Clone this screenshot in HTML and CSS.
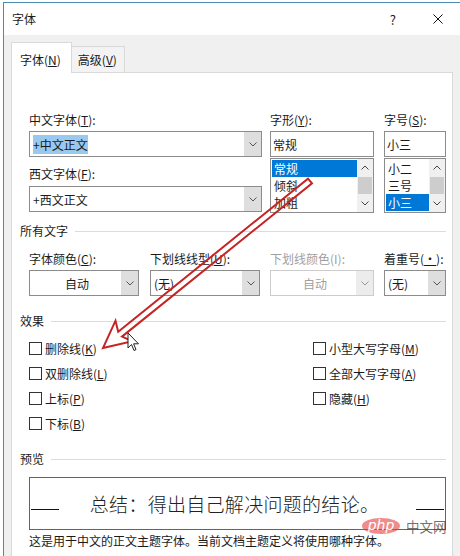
FILE: index.html
```html
<!DOCTYPE html>
<html>
<head>
<meta charset="utf-8">
<title>字体</title>
<link rel="stylesheet" href="styles.css">
</head>
<body>
<div class="window">
  <div class="titlebar">
    <span class="title">字体</span>
    <span class="help">?</span>
    <svg class="close" width="10" height="10" viewBox="0 0 10 10"><path d="M0.5 0.5L9.5 9.5M9.5 0.5L0.5 9.5" stroke="#111" stroke-width="1"/></svg>
  </div>

  <div class="tabs">
    <div class="tab active">字体(<u>N</u>)</div>
    <div class="tab">高级(<u>V</u>)</div>
  </div>

  <div class="panel">

    <div class="fontrow ind">
      <div class="col-face">
        <div class="label">中文字体(<u>T</u>):</div>
        <div class="combo">
          <span class="value"><span class="sel">+中文正文</span></span>
          <span class="drop"><svg width="8" height="5" viewBox="0 0 8 5"><path d="M0.5 0.5L4 4L7.5 0.5" fill="none" stroke="#555"/></svg></span>
        </div>
        <div class="label second">西文字体(<u>F</u>):</div>
        <div class="combo">
          <span class="value">+西文正文</span>
          <span class="drop"><svg width="8" height="5" viewBox="0 0 8 5"><path d="M0.5 0.5L4 4L7.5 0.5" fill="none" stroke="#555"/></svg></span>
        </div>
      </div>

      <div class="col-style">
        <div class="label">字形(<u>Y</u>):</div>
        <div class="field">常规</div>
        <div class="list">
          <div class="items">
            <div class="item on">常规</div>
            <div class="item">倾斜</div>
            <div class="item">加粗</div>
          </div>
          <div class="scroll">
            <span class="arrow"><svg width="8" height="5" viewBox="0 0 8 5"><path d="M0.5 4.5L4 1L7.5 4.5" fill="none" stroke="#444"/></svg></span>
            <span class="thumb"></span>
            <span class="arrow"><svg width="8" height="5" viewBox="0 0 8 5"><path d="M0.5 0.5L4 4L7.5 0.5" fill="none" stroke="#444"/></svg></span>
          </div>
        </div>
      </div>

      <div class="col-size">
        <div class="label">字号(<u>S</u>):</div>
        <div class="field">小三</div>
        <div class="list">
          <div class="items">
            <div class="item">小二</div>
            <div class="item">三号</div>
            <div class="item on">小三</div>
          </div>
          <div class="scroll">
            <span class="arrow"><svg width="8" height="5" viewBox="0 0 8 5"><path d="M0.5 4.5L4 1L7.5 4.5" fill="none" stroke="#444"/></svg></span>
            <span class="thumb"></span>
            <span class="arrow"><svg width="8" height="5" viewBox="0 0 8 5"><path d="M0.5 0.5L4 4L7.5 0.5" fill="none" stroke="#444"/></svg></span>
          </div>
        </div>
      </div>
    </div>

    <div class="header">所有文字<span class="rule"></span></div>

    <div class="textrow ind">
      <div class="col-color">
        <div class="label">字体颜色(<u>C</u>):</div>
        <div class="combo">
          <span class="value center">自动</span>
          <span class="drop"><svg width="8" height="5" viewBox="0 0 8 5"><path d="M0.5 0.5L4 4L7.5 0.5" fill="none" stroke="#555"/></svg></span>
        </div>
      </div>
      <div class="col-under">
        <div class="label">下划线线型(<u>U</u>):</div>
        <div class="combo">
          <span class="value">(无)</span>
          <span class="drop"><svg width="8" height="5" viewBox="0 0 8 5"><path d="M0.5 0.5L4 4L7.5 0.5" fill="none" stroke="#555"/></svg></span>
        </div>
      </div>
      <div class="col-style">
        <div class="label off">下划线颜色(I):</div>
        <div class="combo disabled">
          <span class="value center">自动</span>
          <span class="drop"><svg width="8" height="5" viewBox="0 0 8 5"><path d="M0.5 0.5L4 4L7.5 0.5" fill="none" stroke="#999"/></svg></span>
        </div>
      </div>
      <div class="col-size">
        <div class="label">着重号(<u>·</u>):</div>
        <div class="combo">
          <span class="value">(无)</span>
          <span class="drop"><svg width="8" height="5" viewBox="0 0 8 5"><path d="M0.5 0.5L4 4L7.5 0.5" fill="none" stroke="#555"/></svg></span>
        </div>
      </div>
    </div>

    <div class="header effects">效果<span class="rule"></span></div>

    <div class="checks ind">
      <label class="check"><span class="box"></span>删除线(<u>K</u>)</label>
      <label class="check"><span class="box"></span>双删除线(<u>L</u>)</label>
      <label class="check"><span class="box"></span>上标(<u>P</u>)</label>
      <label class="check"><span class="box"></span>下标(<u>B</u>)</label>
      <label class="check"><span class="box"></span>小型大写字母(<u>M</u>)</label>
      <label class="check"><span class="box"></span>全部大写字母(<u>A</u>)</label>
      <label class="check"><span class="box"></span>隐藏(<u>H</u>)</label>
    </div>

    <div class="header preview-head">预览<span class="rule"></span></div>

    <div class="preview ind">
      <span class="line"></span>
      <span class="sample">总结：得出自己解决问题的结论。</span>
      <span class="line"></span>
    </div>

    <p class="note ind">这是用于中文的正文主题字体。当前文档主题定义将使用哪种字体。</p>
  </div>
</div>

<!-- red callout arrow drawn over the dialog -->
<svg class="callout" width="460" height="556" viewBox="0 0 460 556">
  <polygon points="103,348 132.5,341.3 122,336.6 312,183.4 308,178.6 118.2,331.8 115.5,320.7" fill="none" stroke="#c62424" stroke-width="2" stroke-linejoin="miter"/>
</svg>

<svg class="cursor" width="13" height="20" viewBox="0 0 13 20">
  <path d="M1 1L1 16L4.5 12.5L7 18.5L9 17.6L6.6 11.8L11.5 11.8Z" fill="#fff" stroke="#222" stroke-width="1"/>
</svg>

<div class="watermark">
  <span class="php">php</span>
  <span class="cn">中文网</span>
</div>
</body>
</html>
```

FILE: styles.css
```css
body {
   margin: 0;
   height: 556px;
   overflow: hidden;
   background-color: white;
   font-family: "Noto Sans CJK SC", "Noto Sans", sans-serif;
   font-size: 12px;
   color: #1a1a1a;
}

u {
   text-decoration: underline;
   text-underline-offset: 1px;
}

.window {
   margin: 2px 0 0 3px;
   height: 560px;
   border-top: 1px solid #4a8cb0;
   border-left: 1px solid #4a8cb0;
   background-color: #f0f0f0;
}

.titlebar {
   height: 32px;
   display: flex;
   align-items: center;
   padding-left: 8px;
   background-color: white;
}

.title {
   flex: 1;
   line-height: 14px;
}

.help {
   font-size: 13px;
   margin-right: 37px;
}

.close {
   margin-right: 17px;
}

/* tab strip */
.tabs {
   height: 37px;
   display: flex;
   align-items: flex-end;
   padding-left: 7px;
}

.tab {
   height: 25px;
   display: flex;
   align-items: center;
   padding: 0 7px 0 6px;
   border: 1px solid #d9d9d9;
   border-bottom: none;
   border-left: none;
   background-color: #f3f3f3;
}

.tab.active {
   position: relative;
   z-index: 1;
   height: 28px;
   margin-bottom: -1px;
   padding: 2px 10px 0 8px;
   border-left: 1px solid #d9d9d9;
   background-color: white;
}

.panel {
   width: 426px;
   height: 490px;
   margin-left: 7px;
   padding: 0 6px 0 8px;
   border: 1px solid #d9d9d9;
   background-color: white;
}

.ind {
   margin-left: 9px;
}

.label {
   line-height: 14px;
   height: 14px;
   margin-bottom: 4px;
   white-space: nowrap;
}

.label.second {
   margin-top: 10px;
   margin-bottom: 5px;
}

.label.off {
   color: #a0a0a0;
}

/* combo boxes and fields */
.combo, .field {
   box-sizing: border-box;
   height: 26px;
   display: flex;
   border: 1px solid #8c8c8c;
   background-color: white;
}

.value {
   flex: 1;
   display: flex;
   align-items: center;
   padding-left: 3px;
   white-space: nowrap;
}

.value.center {
   justify-content: center;
}

.sel {
   background-color: #99c9ef;
   padding: 1px 0;
}

.drop {
   width: 17px;
   display: flex;
   align-items: center;
   justify-content: center;
   background-color: #dedede;
}

.combo.disabled {
   border-color: #cccccc;
   color: #a0a0a0;
}

.combo.disabled .drop {
   background-color: #ececec;
}

.field {
   align-items: center;
   padding-left: 2px;
}

.list {
   box-sizing: border-box;
   height: 55px;
   display: flex;
   margin-top: 1px;
   border: 1px solid #8c8c8c;
}

.items {
   flex: 1;
   padding-top: 1px;
}

.item {
   height: 17px;
   line-height: 17px;
   padding-left: 2px;
   margin-left: 1px;
}

.item.on {
   background-color: #0078d7;
   color: white;
}

.scroll {
   width: 16px;
   display: flex;
   flex-direction: column;
   background-color: #f0f0f0;
}

.arrow {
   height: 17px;
   display: flex;
   align-items: center;
   justify-content: center;
}

.thumb {
   flex: 1;
   margin: 1px 1px;
   background-color: #cdcdcd;
}

/* rows */
.fontrow {
   display: flex;
   margin-top: 40px;
}

.col-face {
   width: 233px;
   margin-right: 8px;
}

.col-style {
   width: 104px;
   margin-right: 10px;
}

.col-size {
   width: 62px;
}

.textrow {
   display: flex;
   margin-top: 14px;
}

.col-color {
   width: 110px;
   margin-right: 11px;
}

.col-under {
   width: 110px;
   margin-right: 10px;
}

.header {
   display: flex;
   align-items: center;
   height: 14px;
   line-height: 14px;
   margin-top: 11px;
}

.header .rule {
   flex: 1;
   margin-left: 7px;
   border-top: 1px solid #dcdcdc;
}

.header.effects {
   margin-top: 18px;
}

.header.preview-head {
   margin-top: 16px;
}

/* effects */
.checks {
   display: grid;
   grid-template-columns: 284px auto;
   grid-template-rows: repeat(4, 25px);
   grid-auto-flow: column;
   margin-top: 8px;
}

.check {
   display: flex;
   align-items: center;
   white-space: nowrap;
}

.box {
   box-sizing: border-box;
   width: 13px;
   height: 13px;
   margin-right: 3px;
   border: 1px solid #333;
   background-color: white;
}

/* preview */
.preview {
   box-sizing: border-box;
   width: 417px;
   height: 53px;
   margin-top: 11px;
   display: flex;
   align-items: center;
   padding: 0 1px;
   border: 1px solid #646464;
}

.preview .line {
   width: 28px;
   margin-top: 12px;
   border-top: 1px solid #111;
}

.sample {
   flex: 1;
   text-align: center;
   padding-right: 6px;
   font-size: 19px;
   font-weight: 300;
   letter-spacing: 0.3px;
   color: #222;
}

.note {
   margin-top: 4px;
   margin-bottom: 0;
   line-height: 14px;
}

/* overlays */
.callout {
   position: absolute;
   left: 0;
   top: 0;
}

.cursor {
   position: absolute;
   left: 127px;
   top: 332px;
}

.watermark {
   position: absolute;
   left: 362px;
   top: 516px;
   display: flex;
   align-items: center;
}

.php {
   width: 38px;
   height: 16px;
   line-height: 15px;
   border-radius: 50%;
   background-color: rgba(228, 64, 64, 0.6);
   color: white;
   font-family: "DejaVu Sans", sans-serif;
   font-style: italic;
   font-size: 14px;
   text-align: center;
}

.cn {
   margin-left: 6px;
   font-size: 13.5px;
   color: rgba(50, 50, 50, 0.7);
}
```
